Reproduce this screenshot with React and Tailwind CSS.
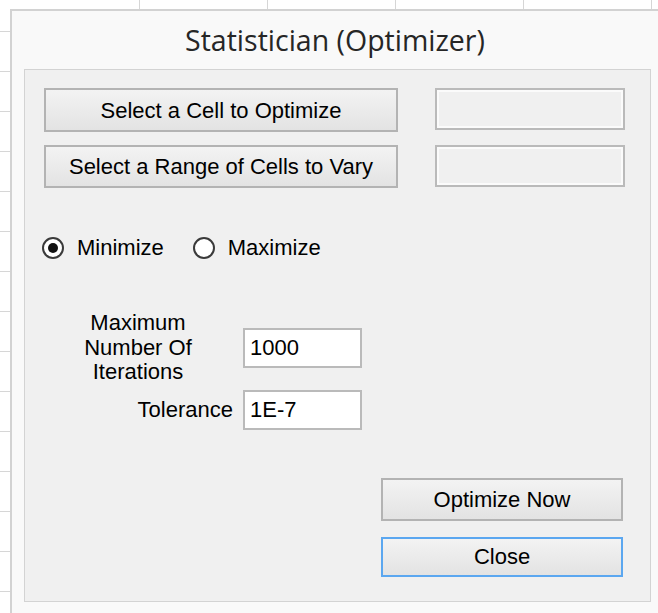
import React from 'react'

// Classic WinForms-style optimizer dialog sitting over a spreadsheet
const sans = { fontFamily: '"Liberation Sans", Arial, sans-serif' }
const titleFont = { fontFamily: '"Open Sans", "Noto Sans", sans-serif' }

const Button = ({ children, focused, className = '' }) => (
  <button
    className={`flex items-center justify-center border-2 bg-gradient-to-b from-[#f3f3f3] to-[#e3e3e3] text-[22px] text-black ${
      focused ? 'border-[#5ba7f0]' : 'border-[#b3b3b3]'
    } ${className}`}
  >
    {children}
  </button>
)

const Field = ({ value = '', disabled, className = '' }) => (
  <input
    readOnly
    value={value}
    className={`border-2 border-[#bababa] px-[5px] text-[22px] text-black outline-none ${
      disabled ? 'bg-[#f0f0f0] shadow-[inset_0_0_0_2px_#fbfbfb]' : 'bg-white'
    } ${className}`}
  />
)

const Radio = ({ checked, label }) => (
  <label className="flex items-center gap-[13px]">
    <span className="w-[22px] h-[22px] rounded-full border-2 border-[#3a3a3a] bg-white flex items-center justify-center">
      {checked && <span className="w-[10px] h-[10px] rounded-full bg-[#111]" />}
    </span>
    <span>{label}</span>
  </label>
)

export default function App() {
  const columns = [140, 128, 128, 128, 128]
  const rows = [23, 40, 40, 40, 40, 40, 40, 40, 40, 40, 40, 40, 40, 40, 40]

  return (
    <div className="w-[658px] h-[613px] bg-white flex flex-col overflow-hidden" style={sans}>
      {/* spreadsheet column edges peeking above the dialog */}
      <div className="h-[9px] flex shrink-0">
        {columns.map((w, i) => (
          <div key={i} className="h-full border-r border-[#d6d6d6] shrink-0" style={{ width: w }} />
        ))}
      </div>

      <div className="flex flex-1 min-h-0">
        {/* row ticks on the left */}
        <div className="w-[10px] shrink-0 flex flex-col">
          {rows.map((h, i) => (
            <div key={i} className="border-b border-[#d6d6d6] shrink-0" style={{ height: h }} />
          ))}
        </div>

        {/* dialog window */}
        <div className="flex-1 border-l-2 border-t-2 border-[#d2d2d2] bg-[#f9f9f9] flex flex-col">
          <div className="h-[58px] flex items-center justify-center">
            <h1 className="text-[28.5px] leading-none text-[#262626]" style={titleFont}>
              Statistician (Optimizer)
            </h1>
          </div>

          <div className="ml-[12px] mr-[7px] h-[533px] border border-[#d3d3d3] bg-[#f0f0f0] flex flex-col pt-[18px] text-[22px] text-black">
            <div className="flex ml-[19px]">
              <Button className="w-[354px] h-[44px]">Select a Cell to Optimize</Button>
              <Field disabled className="ml-[37px] w-[190px] h-[42px]" />
            </div>

            <div className="flex ml-[19px] mt-[13px]">
              <Button className="w-[354px] h-[43px]">Select a Range of Cells to Vary</Button>
              <Field disabled className="ml-[37px] w-[190px] h-[42px]" />
            </div>

            <div className="flex items-center gap-[29px] ml-[17px] mt-[49px] h-[22px] leading-[22px]">
              <Radio checked label="Minimize" />
              <Radio label="Maximize" />
            </div>

            <div className="flex items-center mt-[52px]">
              <div className="w-[208px] pl-[18px] text-center leading-[24.5px]">
                Maximum
                <br />
                Number Of
                <br />
                Iterations
              </div>
              <Field value="1000" className="ml-[10px] w-[119px] h-[40px]" />
            </div>

            <div className="flex items-center mt-[5px]">
              <div className="w-[208px] text-right">Tolerance</div>
              <Field value="1E-7" className="ml-[10px] w-[119px] h-[40px]" />
            </div>

            <div className="self-end mr-[27px] mt-[48px] flex flex-col gap-[16px]">
              <Button className="w-[242px] h-[43px]">Optimize Now</Button>
              <Button focused className="w-[242px] h-[40px]">Close</Button>
            </div>
          </div>
        </div>
      </div>
    </div>
  )
}
